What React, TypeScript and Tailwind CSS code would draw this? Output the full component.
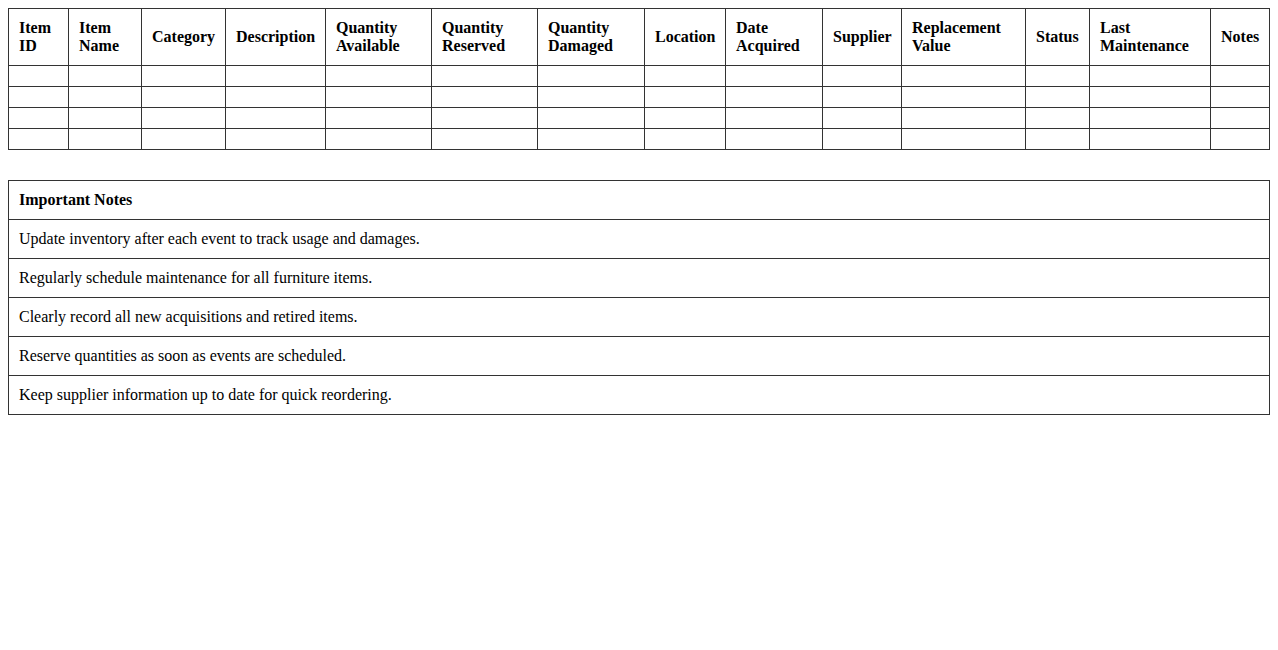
import React from "react";

const columns: { label: React.ReactNode; width: number }[] = [
  { label: <>Item<br />ID</>, width: 60 },
  { label: <>Item<br />Name</>, width: 73 },
  { label: "Category", width: 84 },
  { label: "Description", width: 100 },
  { label: <>Quantity<br />Available</>, width: 106 },
  { label: <>Quantity<br />Reserved</>, width: 106 },
  { label: <>Quantity<br />Damaged</>, width: 107 },
  { label: "Location", width: 81 },
  { label: <>Date<br />Acquired</>, width: 97 },
  { label: "Supplier", width: 79 },
  { label: <>Replacement<br />Value</>, width: 124 },
  { label: "Status", width: 64 },
  { label: <>Last<br />Maintenance</>, width: 121 },
  { label: "Notes", width: 59 },
];

const notes = [
  "Update inventory after each event to track usage and damages.",
  "Regularly schedule maintenance for all furniture items.",
  "Clearly record all new acquisitions and retired items.",
  "Reserve quantities as soon as events are scheduled.",
  "Keep supplier information up to date for quick reordering.",
];

export default function App() {
  return (
    <div className="min-h-screen bg-white p-2 text-black font-['Liberation_Serif','Times_New_Roman',serif] text-[16px] leading-[18px]">
      <table className="w-full table-fixed border-collapse border border-[#333]">
        <colgroup>
          {columns.map((c, i) => (
            <col key={i} style={{ width: c.width }} />
          ))}
        </colgroup>
        <thead>
          <tr>
            {columns.map((c, i) => (
              <th
                key={i}
                className="border border-[#333] p-[10px] text-left align-middle font-bold"
              >
                {c.label}
              </th>
            ))}
          </tr>
        </thead>
        <tbody>
          {[0, 1, 2, 3].map((r) => (
            <tr key={r}>
              {columns.map((_, i) => (
                <td key={i} className="h-[21px] border border-[#333] p-[10px]" />
              ))}
            </tr>
          ))}
        </tbody>
      </table>

      <table className="mt-[30px] w-full border-collapse border border-[#333]">
        <thead>
          <tr>
            <th className="border border-[#333] p-[10px] text-left font-bold">
              Important Notes
            </th>
          </tr>
        </thead>
        <tbody>
          {notes.map((n) => (
            <tr key={n}>
              <td className="border border-[#333] p-[10px]">{n}</td>
            </tr>
          ))}
        </tbody>
      </table>
    </div>
  );
}
